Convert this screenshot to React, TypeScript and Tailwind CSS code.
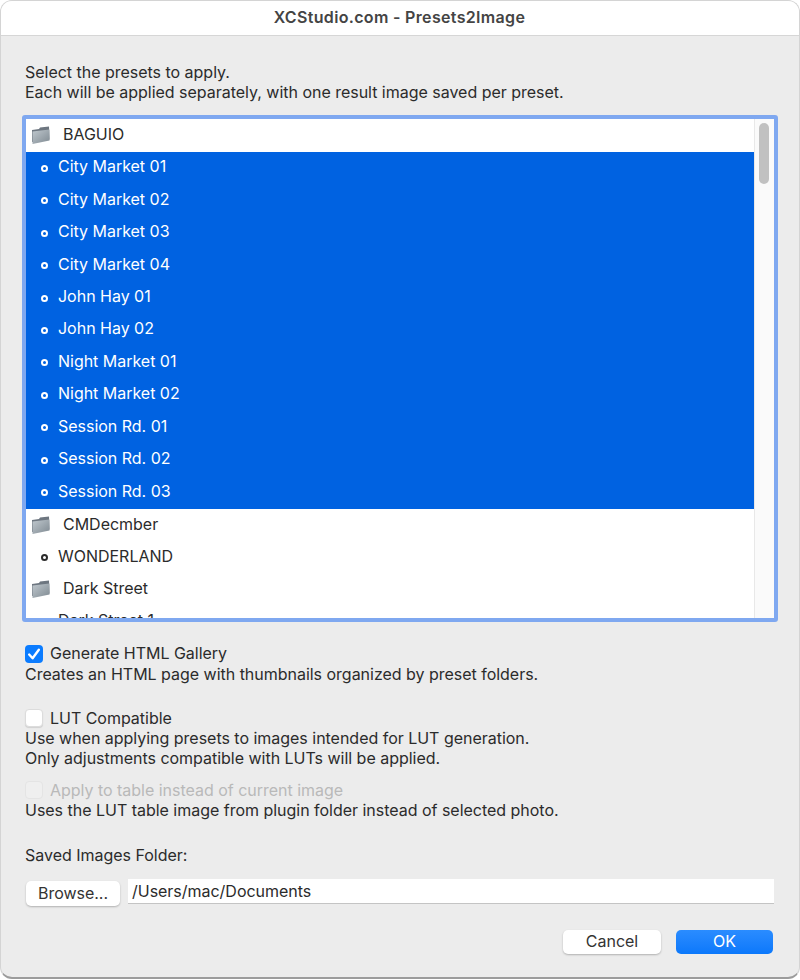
// src/App.tsx
const FONT = "font-['Inter','Noto_Sans',sans-serif]";

type Row = { label: string; folder?: boolean; selected?: boolean };

const ROWS: Row[] = [
  { label: 'BAGUIO', folder: true },
  { label: 'City Market 01', selected: true },
  { label: 'City Market 02', selected: true },
  { label: 'City Market 03', selected: true },
  { label: 'City Market 04', selected: true },
  { label: 'John Hay 01', selected: true },
  { label: 'John Hay 02', selected: true },
  { label: 'Night Market 01', selected: true },
  { label: 'Night Market 02', selected: true },
  { label: 'Session Rd. 01', selected: true },
  { label: 'Session Rd. 02', selected: true },
  { label: 'Session Rd. 03', selected: true },
  { label: 'CMDecmber', folder: true },
  { label: 'WONDERLAND' },
  { label: 'Dark Street', folder: true },
  { label: 'Dark Street 1' },
];

function FolderIcon() {
  return (
    <svg width="20" height="19" viewBox="0 0 20 19" className="shrink-0">
      <defs>
        <linearGradient id="folderFill" x1="0" y1="0" x2="1" y2="1">
          <stop offset="0" stopColor="#c0c8ce" />
          <stop offset="1" stopColor="#7f8a92" />
        </linearGradient>
      </defs>
      <path d="M1 4 L8 3 L9 1.5 L18 0.5 L18.5 13.5 L1 16 Z" fill="#6d7680" />
      <path d="M1.5 5.5 L18.5 3.5 L18.5 14.5 L1.5 18 Z" fill="url(#folderFill)" />
    </svg>
  );
}

function ListRow({ row }: { row: Row }) {
  const color = row.selected ? 'bg-[#0062e1] text-white' : 'text-[#2b2b2b]';
  return (
    <div className={`h-[32.45px] shrink-0 flex items-center ${color}`}>
      {row.folder ? (
        <div className="flex items-center pl-[5px]">
          <FolderIcon />
          <span className="ml-[12px] mb-[3px]">{row.label}</span>
        </div>
      ) : (
        <div className="flex items-center pl-[15px]">
          <span
            className={`w-[7px] h-[7px] rounded-full border-2 ${row.selected ? 'border-white' : 'border-[#2b2b2b]'}`}
          />
          <span className="ml-[10px] mb-[4px]">{row.label}</span>
        </div>
      )}
    </div>
  );
}

function Checkbox({ checked, disabled }: { checked?: boolean; disabled?: boolean }) {
  if (checked) {
    return (
      <span className="w-[18px] h-[18px] rounded-[4px] bg-[#0b7cff] flex items-center justify-center shrink-0">
        <svg width="14" height="14" viewBox="0 0 13 13" fill="none">
          <path d="M2 7 L5.2 10.5 L11 2.5" stroke="white" strokeWidth="2.2" strokeLinecap="round" strokeLinejoin="round" />
        </svg>
      </span>
    );
  }
  return (
    <span
      className={
        disabled
          ? 'w-[18px] h-[18px] rounded-[4px] bg-[#efefef] border border-[#e4e4e4] shrink-0'
          : 'w-[18px] h-[18px] rounded-[4px] bg-white border border-[#dcdcdc] shadow-[0_1px_1px_rgba(0,0,0,0.12)] shrink-0'
      }
    />
  );
}

export default function App() {
  return (
    <div className={`w-[800px] h-[980px] bg-white text-[16px] leading-[20px] tracking-[-0.02px] text-[#2b2b2b] ${FONT}`}>
      <div className="w-full h-[979px] bg-[#ececec] rounded-[12px] overflow-hidden flex flex-col border border-[#d4d4d4] border-b-2 border-b-[#9c9c9c]">
        <header className="h-[35px] shrink-0 bg-white border-b border-[#d6d6d6] pb-[2px] pr-[1px] flex items-center justify-center font-semibold tracking-[0.33px] text-[#444444]">
          XCStudio.com - Presets2Image
        </header>

        <main className="flex-1 flex flex-col px-[24px]">
          <p className="mt-[26px]">Select the presets to apply.</p>
          <p>Each will be applied separately, with one result image saved per preset.</p>

          {/* preset list */}
          <div className="mt-[13px] -mx-[3px] h-[507px] border-[4px] border-[#7fa8f0] rounded-[3px] bg-white flex overflow-hidden">
            <div className="flex-1 flex flex-col overflow-hidden pt-[0.6px]">
              {ROWS.map(row => (
                <ListRow key={row.label} row={row} />
              ))}
            </div>
            <div className="w-[20px] shrink-0 bg-[#fafafa] border-l border-[#e8e8e8] pl-[4px] pt-[4px]">
              <div className="w-[10px] h-[61px] rounded-full bg-[#c1c1c1]" />
            </div>
          </div>

          <label className="mt-[21px] flex items-center gap-[7px]">
            <Checkbox checked />
            <span className="mb-[1px]">Generate HTML Gallery</span>
          </label>
          <p>Creates an HTML page with thumbnails organized by preset folders.</p>

          <label className="mt-[24px] flex items-center gap-[7px]">
            <Checkbox />
            <span>LUT Compatible</span>
          </label>
          <p>Use when applying presets to images intended for LUT generation.</p>
          <p>Only adjustments compatible with LUTs will be applied.</p>

          <label className="mt-[12px] flex items-center gap-[7px]">
            <Checkbox disabled />
            <span className="text-[#b9b9b9]">Apply to table instead of current image</span>
          </label>
          <p>Uses the LUT table image from plugin folder instead of selected photo.</p>

          <p className="mt-[25px]">Saved Images Folder:</p>

          <div className="mt-[14px] flex items-start gap-[8px] pl-[1px] pr-[1px]">
            <button className="mt-[2px] w-[94px] h-[25px] pb-[2px] rounded-[5px] bg-white shadow-[0_1px_2px_rgba(0,0,0,0.25)] text-[#333333]">
              Browse...
            </button>
            <div className="flex-1 h-[25px] bg-white border-b border-[#c4c4c4] pl-[4px] flex items-center">
              /Users/mac/Documents
            </div>
          </div>

          <div className="mt-[24px] flex justify-end gap-[15px] pr-[2px]">
            <button className="w-[98px] h-[24px] pb-[2px] rounded-[5px] bg-white shadow-[0_1px_2px_rgba(0,0,0,0.25)] text-[#333333]">
              Cancel
            </button>
            <button className="w-[97px] h-[24px] pb-[2px] rounded-[5px] bg-gradient-to-b from-[#2a8cff] to-[#0a78fb] text-white">
              OK
            </button>
          </div>
        </main>
      </div>
    </div>
  );
}
